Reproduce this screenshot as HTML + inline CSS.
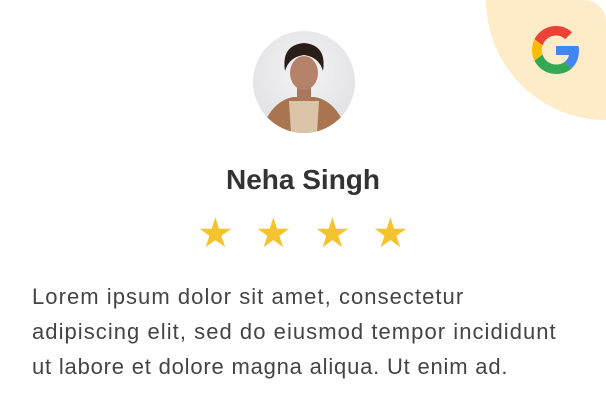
<!DOCTYPE html>
<html><head><style>
html,body{margin:0;padding:0;width:606px;height:405px;background:#fff;overflow:hidden;font-family:"Liberation Sans",sans-serif;position:relative}
.blob{position:absolute;left:486px;top:0;width:120px;height:120px;background:#feebc8;border-radius:0 22px 0 120px}
.g{position:absolute;left:532px;top:26px}
.av{position:absolute;left:253px;top:31px;width:102px;height:102px;border-radius:50%;overflow:hidden;background:radial-gradient(circle at 50% 40%,#f4f4f6,#dcdce0)}
.name{position:absolute;left:0;width:606px;top:164px;text-align:center;font-weight:bold;font-size:28px;color:#333}
.star{position:absolute;top:213px;font-size:41px;color:#f4c430;line-height:40px}
.t{position:absolute;left:32px;font-size:22px;color:#444;white-space:nowrap;letter-spacing:1.05px}
</style></head><body>
<div class="blob"></div>
<svg class="g" width="48" height="48" viewBox="0 0 48 48">
<path fill="#EA4335" d="M24 9.5c3.54 0 6.71 1.22 9.21 3.6l6.85-6.850C35.9 2.38 30.47 0 24 0 14.62 0 6.51 5.38 2.56 13.22l7.98 6.19C12.43 13.72 17.74 9.5 24 9.5z"/>
<path fill="#4285F4" d="M46.98 24.55c0-1.570-.15-3.090-.38-4.550H24v9.020h12.940c-.58 2.960-2.260 5.480-4.780 7.180l7.730 6c4.510-4.180 7.090-10.360 7.090-17.650z"/>
<path fill="#FBBC05" d="M10.53 28.59c-.48-1.450-.76-2.990-.76-4.590s.27-3.140.76-4.590l-7.980-6.190C.92 16.460 0 20.120 0 24c0 3.880.92 7.540 2.560 10.780l7.970-6.190z"/>
<path fill="#34A853" d="M24 48c6.480 0 11.930-2.130 15.890-5.810l-7.730-6c-2.150 1.450-4.920 2.300-8.160 2.300-6.260 0-11.570-4.220-13.470-9.910l-7.980 6.190C6.510 42.620 14.620 48 24 48z"/>
</svg>
<div class="av">
<svg width="102" height="102" viewBox="0 0 102 102">
<path d="M10 95 Q20 70 40 66 L62 66 Q82 70 92 95 L92 102 L10 102Z" fill="#a8754f"/>
<path d="M36 70 L66 70 L64 102 L38 102Z" fill="#d9c4a8"/>
<rect x="44" y="52" width="14" height="18" fill="#a9785c"/>
<ellipse cx="51" cy="42" rx="14" ry="17" fill="#b5836a"/>
<path d="M32 40 Q28 14 51 12 Q74 14 70 40 Q66 26 51 24 Q36 26 32 40Z" fill="#2a1d18"/>
</svg>
</div>
<div class="name">Neha Singh</div>
<div class="star" style="left:197px">★</div>
<div class="star" style="left:255px">★</div>
<div class="star" style="left:314px">★</div>
<div class="star" style="left:372px">★</div>
<div class="t" style="top:284px">Lorem ipsum dolor sit amet, consectetur</div>
<div class="t" style="top:319px">adipiscing elit, sed do eiusmod tempor incididunt</div>
<div class="t" style="top:354px;letter-spacing:0.8px">ut labore et dolore magna aliqua. Ut enim ad.</div>
</body></html>
